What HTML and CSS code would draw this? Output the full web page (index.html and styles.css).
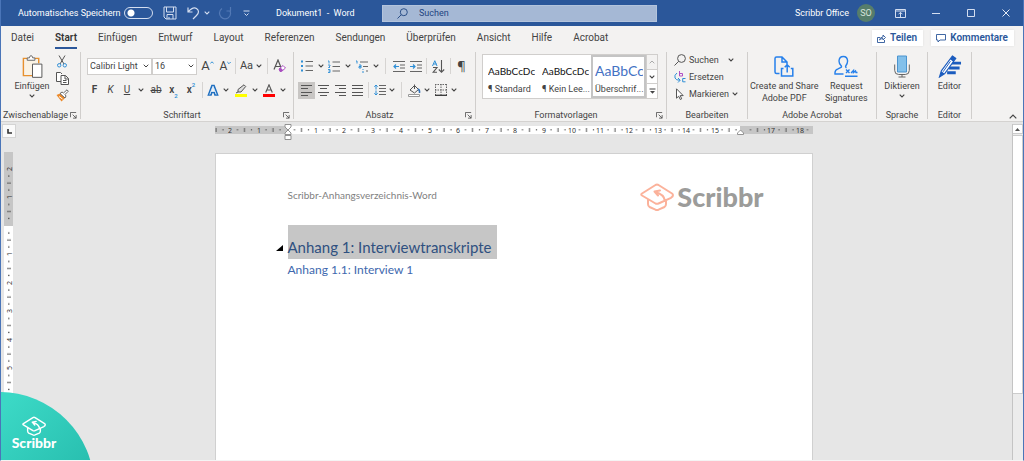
FILE: index.html
```html
<!DOCTYPE html>
<html lang="de">
<head>
<meta charset="utf-8">
<title>Dokument1 - Word</title>
<link rel="stylesheet" href="styles.css">
</head>
<body>
<svg class="defs" aria-hidden="true">
  <symbol id="chev" viewBox="0 0 6 4"><path d="M.7.7 3 3 5.3.7" fill="none" stroke="currentColor" stroke-width="1.1"/></symbol>
  <symbol id="launch" viewBox="0 0 8 8"><path d="M.5 6V.5H7M3 3l4 4M7 3.500V7H3.500" fill="none" stroke="#555"/></symbol>
  <symbol id="cap" viewBox="0 0 34 28"><path d="M32.500 13.500 31 14.800 18.500 20.500q-1.500.7-3 0L2 12.500q-1.500-1 0-2L15.500 2q1.500-.8 3 0L32 10.500q1.500 1 .5 3M8 16.500V21q0 2 1.500 3l6 2.700q1.500.6 3 0l6-2.700q1.500-1 1.500-3v-4M25 18q-1-7-10-9M20 7.500l-5.500 1 3.500 4" fill="none" stroke="currentColor" stroke-width="2" stroke-linejoin="round" stroke-linecap="round"/></symbol>
</svg>
<div class="window">
  <header class="titlebar">
    <div class="quick">
      <label for="autosave">Automatisches Speichern</label>
      <input type="checkbox" id="autosave" class="toggle">
      <button class="tb save" aria-label="Speichern"><svg width="14" height="14" viewBox="0 0 14 14" fill="none" stroke="#d4def0"><path d="M1 1h12v12H3L1 11zM3.500 1v5h7V1M4 13V8.500h6V13M6 13v-2"/></svg></button>
      <button class="tb undo" aria-label="Rückgängig"><svg width="13" height="14" viewBox="0 0 13 14" fill="none" stroke="#d4def0" stroke-width="1.200"><path d="M1 1.500V6h4.500M1.300 5.800Q6 .5 9.500 2.500q4 3 0 7L6 13"/></svg></button>
      <button class="tb drop" aria-label="Mehr"><svg width="6" height="4"><use href="#chev"/></svg></button>
      <button class="tb redo" aria-label="Wiederholen"><svg width="14" height="14" viewBox="0 0 14 14" fill="none" stroke="#5379b5" stroke-width="1.200"><path d="M12.500 1v4H8.500M11.800 4.500Q14 9 10 12q-4 2-7-1Q-.5 6 4 2.500"/></svg></button>
      <button class="tb custom" aria-label="Anpassen"><svg width="7" height="7" viewBox="0 0 7 7" fill="none" stroke="#d4def0"><path d="M.5 1h6M1.500 3.500l2 2 2-2"/></svg></button>
    </div>
    <div class="doc-title">Dokument1&nbsp; -&nbsp; Word</div>
    <div class="search">
      <svg width="11" height="11" viewBox="0 0 11 11" fill="none" stroke="#2b4f88"><circle cx="6.800" cy="4.200" r="3.500"/><path d="M4.300 6.700.5 10.500"/></svg>
      <input type="text" aria-label="Suchen" placeholder="Suchen">
    </div>
    <div class="account">
      <span>Scribbr Office</span>
      <span class="avatar">SO</span>
    </div>
    <div class="sysbtns">
      <button class="tb" aria-label="Menüband-Anzeige"><svg width="11" height="9" viewBox="0 0 11 9" fill="none" stroke="#d4def0"><path d="M.5.5h10v8H.5zM.5 2h10M5.500 8V3.500M3.500 5.300l2-2 2 2"/></svg></button>
      <button class="tb" aria-label="Minimieren"><svg width="8" height="8"><path d="M0 4.500h8" stroke="#d4def0"/></svg></button>
      <button class="tb" aria-label="Maximieren"><svg width="8" height="8"><path d="M.5.5h7v7h-7z" fill="none" stroke="#d4def0"/></svg></button>
      <button class="tb" aria-label="Schließen"><svg width="8" height="8"><path d="M.5.500l7 7M7.500.500l-7 7" stroke="#e4eaf5"/></svg></button>
    </div>
  </header>

  <nav class="tabs">
    <button>Datei</button><button class="current">Start</button><button>Einfügen</button><button>Entwurf</button><button>Layout</button><button>Referenzen</button><button>Sendungen</button><button>Überprüfen</button><button>Ansicht</button><button>Hilfe</button><button>Acrobat</button>
    <div class="actions">
      <button class="action"><svg width="9" height="9" viewBox="0 0 9 9" fill="none" stroke="#2b579a" stroke-width=".9"><path d="M3 3.500H.5v5h7V6M2.500 6q.5-3 3.500-3V1l2.500 2.500L6 6V4.500Q3.500 4.500 2.500 6"/></svg>Teilen</button>
      <button class="action"><svg width="10" height="9" viewBox="0 0 10 9" fill="none" stroke="#2b579a" stroke-width=".9"><path d="M.5.500h9v5.500H4L2 8V6H.5z"/></svg>Kommentare</button>
    </div>
  </nav>

  <section class="ribbon">
    <div class="group clipboard">
      <div class="body row-body">
        <button class="big"><svg width="21" height="24" viewBox="0 0 21 24" fill="none"><path d="M5 3.500H1v18h9M13 3.500h4v5" stroke="#e8912d" stroke-width="1.500"/><path d="M2.500 5h13v4H10v11H2.500z" fill="#fbf3e4"/><path d="M5 5.500V3h2.300Q7.500.700 9 .700T10.700 3H13v2.500z" fill="#fff" stroke="#666"/><path d="M10.500 9.500h9.800v13.800h-9.800z" fill="#fff" stroke="#555"/></svg><span>Einfügen</span><svg width="6" height="4"><use href="#chev"/></svg></button>
        <div class="stack">
          <button class="ic" aria-label="Ausschneiden"><svg width="10" height="13" viewBox="0 0 10 13" fill="none"><path d="M2 .5 7 9M8 .5 3 9" stroke="#555"/><circle cx="2.200" cy="10.300" r="1.700" stroke="#2f8fd6"/><circle cx="7.800" cy="10.300" r="1.700" stroke="#2f8fd6"/></svg></button>
          <button class="ic" aria-label="Kopieren"><svg width="13" height="13" viewBox="0 0 13 13" fill="#fff" stroke="#555"><path d="M5 9.500H.5v-9h4l1.500 1.500"/><path d="M5 3.500h4.500l3 3v6H5zM9 3.500V7h3.500M7 8.500h3.500M7 10.500h3.500" /></svg></button>
          <button class="ic" aria-label="Format übertragen"><svg width="13" height="13" viewBox="0 0 13 13"><path d="M.5 6 4 4.500l5 4.500-3.500 3.500z" fill="#ec8a2b"/><path d="M3 7.500 6.500 10" stroke="#fff"/><path d="M4 4.500 6 3l1.500 1L11 .800l1.300 1.400L9 5.500 10 7 9 9z" fill="#fff" stroke="#555" stroke-width=".9"/></svg></button>
        </div>
      </div>
      <div class="caption"><span>Zwischenablage</span><button class="launcher" aria-label="Optionen"><svg width="7" height="7"><use href="#launch"/></svg></button></div>
    </div>

    <div class="group font">
      <div class="body">
        <div class="tools">
          <select class="combo face" aria-label="Schriftart"><option>Calibri Light</option></select><select class="combo size" aria-label="Schriftgrad"><option>16</option></select>
          <button class="ic w21 glyph" aria-label="Größer">A<svg width="4" height="10" viewBox="0 0 4 10" fill="none" stroke="#2f8fd6"><path d="M.3 2.500 2 .800l1.700 1.700"/></svg></button><button class="ic w15 glyph small" aria-label="Kleiner">A<svg width="4" height="10" viewBox="0 0 4 10" fill="none" stroke="#2f8fd6"><path d="M.3 1 2 2.700 3.700 1"/></svg></button><i class="sep"></i>
          <button class="ic w17 glyph aa">Aa</button><button class="ic w8" aria-label="Auswahl"><svg width="6" height="4"><use href="#chev"/></svg></button><i class="sep wide"></i>
          <button class="ic w15" aria-label="Formatierung löschen"><svg width="13" height="14" viewBox="0 0 13 14"><path d="M1 10.500 5 1l3 7.500M2.500 7.500H7" fill="none" stroke="#555" stroke-width="1.200"/><path d="m6 10 4-3.500 2.500 2.500-4 3.500H7z" fill="#fff" stroke="#a94fc0"/><path d="m6 10 1.500-1.500L10 11l-1.500 1.500H7z" fill="#a94fc0"/></svg></button>
        </div>
        <div class="tools">
          <button class="ic w15"><b>F</b></button><button class="ic w17"><em>K</em></button><button class="ic w16"><u>U</u></button><button class="ic w12" aria-label="Auswahl"><svg width="6" height="4"><use href="#chev"/></svg></button><button class="ic w18"><s>ab</s></button><button class="ic w17 strong">x<sub>2</sub></button><button class="ic w18 strong">x<sup>2</sup></button><i class="sep"></i>
          <button class="ic w16" aria-label="Texteffekte"><svg width="12" height="12" viewBox="0 0 12 12" fill="none"><path d="M1.500 11 5 1.500h2L10.500 11H8L7.300 8.500H4.700L4 11z" stroke="#1f6fc0" stroke-width="1.700"/><path d="M2.700 10.500 6 2.500l3.300 8M4 7.500h4" stroke="#cfe4f7" stroke-width=".8"/></svg></button><button class="ic w10" aria-label="Auswahl"><svg width="6" height="4"><use href="#chev"/></svg></button>
          <button class="ic w19" aria-label="Texthervorhebung"><svg width="12" height="13" viewBox="0 0 12 13"><path d="M3 8V5.500L9 .800l1.700 1.700L6 8H3L1 9" fill="#ddd" stroke="#555"/><path d="M0 10h12v3H0z" fill="#ff0"/></svg></button><button class="ic w10" aria-label="Auswahl"><svg width="6" height="4"><use href="#chev"/></svg></button>
          <button class="ic w18" aria-label="Schriftfarbe"><svg width="12" height="13" viewBox="0 0 12 13"><path d="M2.700 8.500 6 .800l3.300 7.700M3.700 6h4.600" fill="none" stroke="#555" stroke-width="1.100"/><path d="M0 10h12v3H0z" fill="#f00"/></svg></button><button class="ic w10" aria-label="Auswahl"><svg width="6" height="4"><use href="#chev"/></svg></button>
        </div>
      </div>
      <div class="caption"><span>Schriftart</span><button class="launcher" aria-label="Optionen"><svg width="7" height="7"><use href="#launch"/></svg></button></div>
    </div>

    <div class="group para">
      <div class="body">
        <div class="tools">
          <button class="ic w18" aria-label="Aufzählung"><svg width="12" height="12" viewBox="0 0 12 12"><path d="M4.500 1.500H12M4.500 6H12M4.500 10.500H12" stroke="#666"/><path d="M0 .5h2v2H0zM0 5h2v2H0zM0 9.500h2v2H0z" fill="#2f8fd6"/></svg></button><button class="ic w9" aria-label="Auswahl"><svg width="6" height="4"><use href="#chev"/></svg></button>
          <button class="ic w18" aria-label="Nummerierung"><svg width="12" height="13" viewBox="0 0 12 13" fill="none"><path d="M4.500 2H12M4.500 6.500H12M4.500 11H12" stroke="#666"/><path d="M0 1h1v2.500M0 5h2v1L.5 7.500H2M0 9.500h2v3H0M.5 11H2" stroke="#2f8fd6" stroke-width=".9"/></svg></button><button class="ic w10" aria-label="Auswahl"><svg width="6" height="4"><use href="#chev"/></svg></button>
          <button class="ic w18" aria-label="Liste mit mehreren Ebenen"><svg width="12" height="13" viewBox="0 0 12 13" fill="none"><path d="M4 2h8M7 6.500h5M10 11h2" stroke="#666"/><path d="M0 1h1v2.500M3 5h2v3H3V6.500h2M7 9v1M7 11v2" stroke="#2f8fd6"/></svg></button><button class="ic w10" aria-label="Auswahl"><svg width="6" height="4"><use href="#chev"/></svg></button><i class="sep wide"></i>
          <button class="ic w17" aria-label="Einzug verkleinern"><svg width="12" height="11" viewBox="0 0 12 11" fill="none"><path d="M0 .5h12M7 4h5M7 7h5M0 10.500h12" stroke="#666"/><path d="M6 5.500H1M3 3.500l-2 2 2 2" stroke="#2f8fd6" stroke-width="1.200"/></svg></button><button class="ic w17" aria-label="Einzug vergrößern"><svg width="12" height="11" viewBox="0 0 12 11" fill="none"><path d="M0 .5h12M7 4h5M7 7h5M0 10.500h12" stroke="#666"/><path d="M0 5.500h5M3 3.500l2 2-2 2" stroke="#2f8fd6" stroke-width="1.200"/></svg></button><i class="sep"></i>
          <button class="ic w19" aria-label="Sortieren"><svg width="13" height="13" viewBox="0 0 13 13" fill="none"><path d="M.5 6 2.800.7 5 6M1.500 4h3" stroke="#2f8fd6"/><path d="M1 7.500h4L1 12.300h4M9.500 0v12M6.800 9.500l2.700 2.700 2.700-2.700" stroke="#555" stroke-width="1.100"/></svg></button><i class="sep"></i>
          <button class="ic w17 pilcrow" aria-label="Absatzmarken">¶</button>
        </div>
        <div class="tools">
          <button class="ic w17 on" aria-label="Linksbündig"><svg width="11" height="11"><path d="M0 .5h11M0 3.500h7M0 7.500h11M0 10.500h7" stroke="#555"/></svg></button><button class="ic w17" aria-label="Zentriert"><svg width="11" height="11"><path d="M0 .5h11M2 3.500h7M0 7.500h11M2 10.500h7" stroke="#555"/></svg></button><button class="ic w17" aria-label="Rechtsbündig"><svg width="11" height="11"><path d="M0 .5h11M4 3.500h7M0 7.500h11M4 10.500h7" stroke="#555"/></svg></button><button class="ic w17" aria-label="Blocksatz"><svg width="11" height="11"><path d="M0 .5h11M0 3.500h11M0 7.500h11M0 10.500h11" stroke="#555"/></svg></button><i class="sep"></i>
          <button class="ic w17" aria-label="Zeilenabstand"><svg width="12" height="12" viewBox="0 0 12 12" fill="none"><path d="M5 1.500h7M5 4.500h7M5 7.500h7M5 10.500h7" stroke="#666"/><path d="M2 1v4.500M.3 2.700 2 1l1.700 1.700M2 6.500V11M.3 9.300 2 11l1.700-1.700" stroke="#2f8fd6"/></svg></button><button class="ic w8" aria-label="Auswahl"><svg width="6" height="4"><use href="#chev"/></svg></button><i class="sep wider"></i>
          <button class="ic w15" aria-label="Schattierung"><svg width="13" height="13" viewBox="0 0 13 13" fill="none"><path d="M2 6 6.500 1.500l4 4L6.500 9zM6.500 5V.5" stroke="#555"/><path d="M10 5q2 1 1.500 4" stroke="#2f6fb6" stroke-width="1.500"/><path d="M.5 10.500h11v2H.5z" fill="#fff" stroke="#999"/></svg></button><button class="ic w9" aria-label="Auswahl"><svg width="6" height="4"><use href="#chev"/></svg></button>
          <button class="ic w19" aria-label="Rahmen"><svg width="12" height="12" viewBox="0 0 12 12" fill="none"><path d="M.5 0v11M6 0v11M11.500 0v11M0 .5h12M0 6h12" stroke="#666" stroke-dasharray="1.500 1"/><path d="M0 11.300h12" stroke="#333" stroke-width="1.300"/></svg></button><button class="ic w8" aria-label="Auswahl"><svg width="6" height="4"><use href="#chev"/></svg></button>
        </div>
      </div>
      <div class="caption"><span>Absatz</span><button class="launcher" aria-label="Optionen"><svg width="7" height="7"><use href="#launch"/></svg></button></div>
    </div>

    <div class="group styles">
      <div class="body">
        <div class="gallery">
          <button class="style"><span class="sample">AaBbCcDc</span><span class="name">¶ Standard</span></button>
          <button class="style"><span class="sample">AaBbCcDc</span><span class="name">¶ Kein Lee...</span></button>
          <button class="style picked"><span class="sample head">AaBbCc</span><span class="name">Überschrif...</span></button>
          <div class="scroller">
            <button aria-label="Nach oben" class="dim"><svg width="6" height="4"><path d="M.7 3.300 3 1l2.300 2.300" fill="none" stroke="#aaa"/></svg></button>
            <button aria-label="Nach unten"><svg width="6" height="4"><use href="#chev"/></svg></button>
            <button aria-label="Alle anzeigen"><svg width="7" height="7" viewBox="0 0 7 7"><path d="M.5 1h6" stroke="#444"/><path d="M1 3h5L3.500 5.800z" fill="#444"/></svg></button>
          </div>
        </div>
      </div>
      <div class="caption"><span>Formatvorlagen</span><button class="launcher" aria-label="Optionen"><svg width="7" height="7"><use href="#launch"/></svg></button></div>
    </div>

    <div class="group edit">
      <div class="body lines">
        <button class="line"><svg width="12" height="12" viewBox="0 0 12 12" fill="none" stroke="#555"><circle cx="7.500" cy="4.500" r="3.900"/><path d="M4.700 7.300.5 11.500"/></svg><span>Suchen</span><svg class="gap" width="6" height="4"><use href="#chev"/></svg></button>
        <button class="line"><svg width="12" height="12" viewBox="0 0 12 12" fill="none"><path d="M5.500 0v5h3V2.500h-3" stroke="#b04fc4"/><path d="M11.500 7.500H8.700v3.300h2.800" stroke="#2f8fd6"/><path d="M3 2Q0 4 1 7q1 2.500 5 2.200M4 7l2.200 2.200L4 11.500" stroke="#2f8fd6"/></svg><span>Ersetzen</span></button>
        <button class="line"><svg width="12" height="12" viewBox="0 0 12 12" fill="#fff" stroke="#555"><path d="M2.500.8v9.400l2.200-2 1.600 3.300 1.400-.7-1.500-3.200h3z"/></svg><span>Markieren</span><svg width="6" height="4"><use href="#chev"/></svg></button>
      </div>
      <div class="caption"><span>Bearbeiten</span></div>
    </div>

    <div class="group acro">
      <div class="body row-body">
        <button class="big"><svg width="20" height="22" viewBox="0 0 20 22" fill="none" stroke="#2680eb" stroke-width="1.500"><path d="M5.500 18H2.500Q1 18 1 16.500V3q0-1.500 1.500-1.500H8L13 6.500V9M8 1.500v5h5M9.500 13H7.500v7.500h11.300V13h-2M13.200 17V9.500M10.700 11.800l2.500-2.500 2.500 2.500"/></svg><span>Create and Share<br>Adobe PDF</span></button>
        <button class="big"><svg width="24" height="22" viewBox="0 0 24 22" fill="none" stroke="#2680eb" stroke-width="1.400"><path d="M9.500 18.500H1q-.5-4 3-5.200l3-1.300q1-.7 0-2Q5 8 5 5.500 5.200 1 9.300 1t4.300 4.500Q13.500 8 12 10q-1 1.500.5 2.300M11 20.700h12.500M12 14l3.500 3.500M15.500 14 12 17.500M17 17.500l2.500-2.500v2l2-1.500.5 1.500h1.500"/></svg><span>Request<br>Signatures</span></button>
      </div>
      <div class="caption"><span>Adobe Acrobat</span></div>
    </div>

    <div class="group speech">
      <div class="body row-body">
        <button class="big"><svg width="16" height="22" viewBox="0 0 16 22"><path d="M3.500.500h9v16h-9z" fill="#83c0ea" stroke="#4b94cf"/><path d="M.700 9v6q0 4 4 4h6.600q4 0 4-4V9M8 19v2.500M4.500 21.500h7" fill="none" stroke="#666"/></svg><span>Diktieren</span><svg width="6" height="4"><use href="#chev"/></svg></button>
      </div>
      <div class="caption"><span>Sprache</span></div>
    </div>

    <div class="group editor">
      <div class="body row-body">
        <button class="big"><svg width="24" height="24" viewBox="0 0 24 24"><path d="M14 8.500h9.500M11 13.500h11M9 18.500h9" stroke="#1b5cbe" stroke-width="3"/><path d="M14.500 1 18 3.500 6.500 19.500 1 23 3 16.500z" fill="#fff" stroke="#1b5cbe" stroke-width="1.200"/><path d="M14.500 1 18 3.500 15.500 7 12 4.500zM1 23l2-6 3.500 2.500z" fill="#1b5cbe"/><path d="M12.500 6.500 4.800 17.500" stroke="#1b5cbe"/></svg><span>Editor</span></button>
      </div>
      <div class="caption"><span>Editor</span></div>
    </div>
    <button class="collapse" aria-label="Menüband reduzieren"><svg width="8" height="5"><path d="M.7 4.300 4 1l3.300 3.300" fill="none" stroke="#444" stroke-width="1.200"/></svg></button>
  </section>

  <main class="work">
    <aside class="left-rail">
      <button class="tabstop" aria-label="Tabstopp"><svg width="5" height="5"><path d="M1 0v4h4" fill="none" stroke="#333" stroke-width="1.600"/></svg></button>
      <svg class="vruler" width="9" height="309" viewBox="0 0 9 309">
        <defs><pattern id="vt" x="0" y="17" width="9" height="28.500" patternUnits="userSpaceOnUse"><path d="M4 7h1.500M3 14h4M4 21h1.500" stroke="#555"/></pattern></defs>
        <path d="M0 0h9v309H0z" fill="#fff"/><path d="M0 0h9v74H0z" fill="#c6c6c6"/>
        <path d="M0 22h9v287H0z" fill="url(#vt)"/>
        <g class="num"><text transform="translate(8 17) rotate(-90)">2</text><text transform="translate(8 45) rotate(-90)">1</text><text transform="translate(8 102) rotate(-90)">1</text><text transform="translate(8 131) rotate(-90)">2</text><text transform="translate(8 159) rotate(-90)">3</text><text transform="translate(8 188) rotate(-90)">4</text><text transform="translate(8 216) rotate(-90)">5</text></g>
      </svg>
    </aside>
    <div class="canvas">
      <div class="column">
        <svg class="hruler" width="598" height="16" viewBox="0 0 598 16">
          <defs><pattern id="ht" x="72.500" y="0" width="28.500" height="16" patternUnits="userSpaceOnUse"><path d="M7 5v1.500M14 4v4M21 5v1.500" stroke="#555"/></pattern></defs>
          <path d="M0 2h598v8H0z" fill="#c6c6c6"/><path d="M73 2h452v8H73z" fill="#fff"/>
          <path d="M0 0h596v16H0z" fill="url(#ht)"/>
          <g class="num"><text x="15" y="9">2</text><text x="44" y="9">1</text><text x="101" y="9">1</text><text x="129" y="9">2</text><text x="158" y="9">3</text><text x="186" y="9">4</text><text x="215" y="9">5</text><text x="243" y="9">6</text><text x="272" y="9">7</text><text x="300" y="9">8</text><text x="329" y="9">9</text><text x="357" y="9">10</text><text x="385" y="9">11</text><text x="414" y="9">12</text><text x="443" y="9">13</text><text x="471" y="9">14</text><text x="500" y="9">15</text><text x="556" y="9">17</text><text x="585" y="9">18</text></g>
          <g fill="#fff" stroke="#888" stroke-width=".9"><path d="M70 .5h6V3l-3 3-3-3zM73 6l3 3v1.500h-6V9zM70 11.500h6v4h-6zM522.500 10.500V9l3-3 3 3v1.500z"/></g>
        </svg>
        <article class="page">
          <div class="page-head">
            <p>Scribbr-Anhangsverzeichnis-Word</p>
            <div class="brand"><svg width="34" height="28"><use href="#cap"/></svg><span>Scribbr</span></div>
          </div>
          <div class="heading"><svg width="7" height="7"><path d="M7 0v6H0z"/></svg><h1>Anhang 1: Interviewtranskripte</h1></div>
          <h2>Anhang 1.1: Interview 1</h2>
        </article>
      </div>
    </div>
    <div class="scrollbar"><button aria-label="Nach oben scrollen"><svg width="5" height="3"><path d="M0 3 2.500 0 5 3z" fill="#555"/></svg></button><div class="thumb"></div></div>
  </main>
  <div class="badge"><svg width="24" height="20"><use href="#cap"/></svg><span>Scribbr</span></div>
</div>
</body>
</html>
```
FILE: styles.css
```css
* { box-sizing: border-box; }
body { margin: 0; font: 9px/12px Roboto, "Noto Sans", sans-serif; color: #444; }
button, input, select { font: inherit; color: inherit; }
button { background: none; border: 0; padding: 0; margin: 0; }
svg { display: block; flex: none; }
.defs { position: absolute; width: 0; height: 0; }

.window { position: relative; display: flex; flex-direction: column; height: 100vh; overflow: hidden; background: #e6e6e6; border: 1px solid #4a75b8; border-top: 0; border-bottom-color: #f4f4f4; }

/* title bar */
.titlebar { display: flex; align-items: center; flex: none; height: 26px; background: #2b579a; color: #fff; }
.quick { display: flex; align-items: center; width: 275px; padding-left: 17px; flex: none; }
.quick label { width: 106px; white-space: nowrap; }
.toggle { appearance: none; width: 29px; height: 12px; margin: 0 10px 0 0; border: 1px solid #d4def0; border-radius: 6px; background: radial-gradient(circle at 6px 5px, #fff 3px, transparent 4px); }
.tb { display: flex; align-items: center; justify-content: center; color: #d4def0; }
.save { width: 14px; margin-right: 10px; }
.undo { width: 13px; margin-right: 4px; }
.drop { width: 6px; margin-right: 8px; }
.redo { width: 14px; margin-right: 11px; }
.doc-title { width: 106px; flex: none; }
.search { display: flex; align-items: center; flex: 0 1 275px; height: 17px; padding-left: 14px; gap: 11px; background: #a5b8d5; border: 1px solid #b4c4dc; }
.search input { flex: 1; min-width: 0; padding: 0; border: 0; background: none; outline: 0; }
.search input::placeholder { color: #1f4480; opacity: 1; }
.account { display: flex; align-items: center; gap: 8px; margin-left: auto; white-space: nowrap; }
.avatar { display: flex; align-items: center; justify-content: center; width: 18px; height: 18px; border-radius: 50%; background: #567d6b; color: #d5e2da; }
.sysbtns { display: flex; margin-left: 8px; }
.sysbtns .tb { width: 35px; height: 26px; }

/* tabs */
.tabs { display: flex; align-items: center; flex: none; height: 24px; padding-left: 10px; gap: 21px; background: #f3f2f1; font-size: 10px; }
.tabs > button { height: 22px; padding-top: 2px; white-space: nowrap; border-bottom: 2px solid transparent; }
.tabs .current { font-weight: 600; color: #333; border-bottom-color: #2b579a; }
.actions { display: flex; gap: 8px; margin: 0 9px 0 auto; }
.action { display: flex; align-items: center; gap: 4px; height: 16px; padding: 0 6px 0 5px; background: #fff; box-shadow: 0 0 2px #ddd; color: #2b579a; font-weight: 600; }

/* ribbon */
.ribbon { display: flex; flex: none; height: 72px; padding: 2px 0; background: #f3f2f1; border-bottom: 1px solid #d4d2d0; }
.group { display: flex; flex-direction: column; flex: none; border-right: 1px solid #d0cecc; }
.body { flex: 1; min-height: 0; padding: 5px 4px 0; }
.row-body { display: flex; padding: 3px 2px 0; }
.caption { display: flex; align-items: center; justify-content: center; height: 8px; white-space: nowrap; }
.caption span { flex: 1; text-align: center; }
.launcher { width: 10px; }
.clipboard { width: 80px; }
.clipboard .row-body { padding: 3px 7px 0 12px; }
.font { width: 213px; }
.para { width: 182px; }
.styles { width: 191px; }
.edit { width: 81px; }
.acro { width: 129px; }
.speech { width: 51px; }
.editor { width: 44px; }
.big { display: flex; flex-direction: column; align-items: center; justify-content: flex-start; flex: 1; gap: 2px; white-space: nowrap; }
.big svg:first-child { height: 23px; }
.stack { display: flex; flex-direction: column; align-items: center; gap: 4px; width: 22px; }
.stack .ic { height: 13px; }
.font .body { padding-left: 6px; }
.tools { display: flex; align-items: center; height: 18px; margin-bottom: 6px; }
.ic { display: flex; align-items: center; justify-content: center; flex: none; height: 17px; font-size: 10px; }
.w8 { width: 8px; } .w9 { width: 9px; } .w10 { width: 10px; } .w12 { width: 12px; } .w15 { width: 15px; } .w16 { width: 16px; } .w17 { width: 17px; } .w18 { width: 18px; } .w19 { width: 19px; } .w21 { width: 21px; }
.sep { flex: none; width: 1px; height: 16px; margin: 0 2px; background: #d6d4d2; }
.sep.wide { margin: 0 4px; }
.sep.wider { margin: 0 5px; }
.on { background: #c8c6c4; }
.glyph { font-size: 13px; }
.glyph.small { font-size: 12px; }
.glyph.aa { font-size: 11px; }
.strong { font-weight: 600; }
.ic sub, .ic sup { font-size: 6px; line-height: 6px; color: #2f8fd6; }
.ic sub { align-self: flex-end; }
.ic sup { align-self: flex-start; }
.pilcrow { font: 13px "Noto Sans", sans-serif; }
.combo { appearance: none; height: 17px; padding: 0 2px; border: 1px solid #d0cecc; border-radius: 0; background: #fff url("data:image/svg+xml,%3Csvg xmlns='http://www.w3.org/2000/svg' width='6' height='4'%3E%3Cpath d='M.7.7 3 3 5.3.7' fill='none' stroke='%23444'/%3E%3C/svg%3E") no-repeat right 2px center; }
.face { width: 65px; }
.size { width: 45px; }

.styles .body { padding: 2px 8px 0 6px; }
.gallery { display: flex; height: 45px; background: #fff; border: 1px solid #d0cecc; }
.style { display: flex; flex-direction: column; justify-content: flex-start; flex: 1 1 0; min-width: 0; height: 43px; padding: 10px 2px 0 5px; overflow: hidden; white-space: nowrap; text-align: left; gap: 6px; }
.style .sample { width: 100%; overflow: hidden; font: 10px/12px Lato, sans-serif; color: #111; }
.style .name { width: 100%; }
.picked { flex: 0 0 55px; padding: 6px 1px 0 2px; border: 2px solid #c4c4c4; gap: 5px; }
.style .head { font-size: 14px; line-height: 15px; color: #4472c4; }
.scroller { display: flex; flex-direction: column; width: 11px; border-left: 1px solid #d0cecc; }
.scroller button { display: flex; align-items: center; justify-content: center; flex: 1; border-bottom: 1px solid #d0cecc; }
.scroller button:last-child { border-bottom: 0; }
.dim { background: #f3f2f1; }

.lines { display: flex; flex-direction: column; gap: 5px; padding: 2px 0 0 7px; }
.line { display: flex; align-items: center; gap: 3px; height: 12px; white-space: nowrap; }
.gap { margin-left: 6px; }
.collapse { margin: auto 6px 0 auto; }

/* workspace */
.work { display: flex; flex: 1; min-height: 0; padding-top: 2px; }
.left-rail { flex: none; width: 16px; }
.tabstop { display: flex; align-items: center; justify-content: center; width: 14px; height: 14px; margin: 0 0 14px 1px; background: #fafafa; border: 1px solid #d4d4d4; }
.vruler { margin-left: 3px; }
.num { font: 7px "Noto Sans", sans-serif; fill: #333; text-anchor: middle; }
.canvas { display: flex; flex: 1; justify-content: center; min-width: 0; padding-right: 2px; }
.column { display: flex; flex-direction: column; flex: 0 1 598px; min-width: 0; }
.page { flex: 1; margin-top: 13px; padding: 0 48px 0 72px; background: #fff; border: 1px solid #d0d0d0; border-bottom: 0; font-family: Lato, sans-serif; }
.page-head { display: flex; justify-content: space-between; align-items: flex-start; height: 28px; margin-top: 29px; font-size: 10px; color: #7f7f7f; }
.page-head p { margin: 6px 0 0; }
.brand { display: flex; align-items: center; gap: 3px; color: #fbb29b; }
.brand span { font: 900 27px/28px Lato, sans-serif; color: #9c9c9a; }
.heading { display: flex; align-items: flex-end; margin: 14px 0 0 -12px; gap: 5px; }
.heading svg { margin-bottom: 7px; }
h1, h2 { margin: 0; font-weight: 400; white-space: nowrap; }
h1 { padding: 12px 6px 2px 0; background: #c6c6c6; font-size: 15px; line-height: 20px; color: #2f5080; }
h2 { margin-top: 3px; font-size: 12px; line-height: 16px; color: #4068ae; }
.scrollbar { display: flex; flex-direction: column; flex: none; width: 11px; border-left: 1px solid #c4c4c4; background: #ececec; }
.scrollbar button { display: flex; align-items: center; justify-content: center; height: 10px; background: #fff; border: 1px solid #ccc; border-left: 0; }
.thumb { height: 77%; margin-top: 1px; background: #fff; border: 1px solid #ccc; border-left: 0; }

.badge { position: absolute; left: -96px; bottom: -121px; display: flex; flex-direction: column; align-items: center; width: 189px; height: 189px; padding: 24px 0 0 69px; border-radius: 50%; background: linear-gradient(135deg, #3bd8c5 30%, #27bdae 70%); color: #fff; }
.badge span { font: 900 14px/14px Lato, sans-serif; }
```
